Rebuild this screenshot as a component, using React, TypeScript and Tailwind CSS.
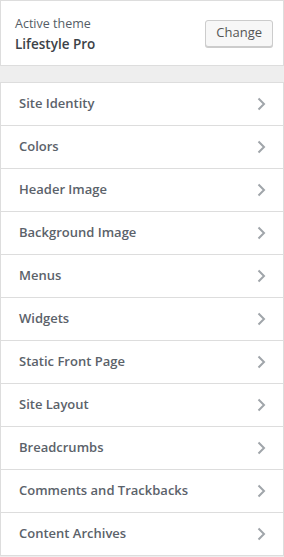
import React from 'react';

const SECTIONS = [
  'Site Identity',
  'Colors',
  'Header Image',
  'Background Image',
  'Menus',
  'Widgets',
  'Static Front Page',
  'Site Layout',
  'Breadcrumbs',
  'Comments and Trackbacks',
  'Content Archives',
];

const Chevron: React.FC = () => (
  <svg width="10" height="14" viewBox="0 0 10 14" fill="none">
    <path d="M2.5 1.5 L8 7 L2.5 12.5" stroke="#a0a5aa" strokeWidth="2" />
  </svg>
);

const App: React.FC = () => {
  return (
    <div
      className="w-[284px] h-[557px] bg-[#eeeeee] overflow-hidden"
      style={{ fontFamily: '"Open Sans", "Noto Sans", sans-serif' }}
    >
      {/* Active theme */}
      <div className="h-[66px] bg-white border border-[#dddddd] flex items-center justify-between pl-[14px] pr-[10px]">
        <div className="flex flex-col pt-[3px]">
          <span className="text-[12.5px] leading-[18px] text-[#555d66]">Active theme</span>
          <span className="text-[13.5px] leading-[22px] font-semibold text-[#3c4248]">Lifestyle Pro</span>
        </div>
        <button className="h-[27px] px-[10px] bg-[#f7f7f7] border border-[#cccccc] rounded-[3px] text-[13px] text-[#555555] shadow-[0_1px_0_#cccccc]">
          Change
        </button>
      </div>

      <div className="h-[16px]" />

      {/* Sections */}
      <ul className="border-t border-[#dddddd]">
        {SECTIONS.map((s) => (
          <li
            key={s}
            className="h-[43px] bg-white border-b border-x border-[#dddddd] flex items-center justify-between pl-[18px] pr-[17px]"
          >
            <span className="text-[13px] font-semibold text-[#5b626a]">{s}</span>
            <Chevron />
          </li>
        ))}
      </ul>
    </div>
  );
};

export default App;
